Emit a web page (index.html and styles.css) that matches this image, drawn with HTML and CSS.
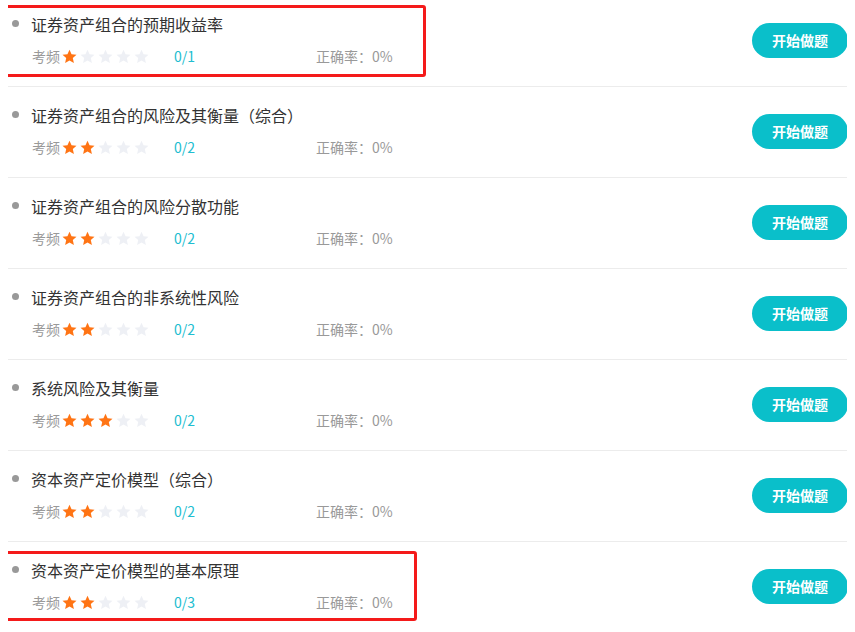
FILE: index.html
```html
<!DOCTYPE html>
<html lang="zh-CN">
<head>
  <meta charset="UTF-8">
  <meta name="viewport" content="width=device-width, initial-scale=1.0">
  <title>知识点练习</title>
  <link rel="stylesheet" href="styles.css">
</head>
<body>
  <svg class="defs" width="0" height="0">
    <symbol id="star" viewBox="0 0 24 24">
      <path d="M12 1l3.3 7.3 7.9.8-5.9 5.3 1.7 7.8L12 18.2l-7 4 1.7-7.8-5.9-5.3 7.9-.8z"/>
    </symbol>
  </svg>

  <ul class="point-list" id="list"></ul>

  <script>
    const points = [
      { name: '证券资产组合的预期收益率', stars: 1, total: 1, mark: 'mark-first' },
      { name: '证券资产组合的风险及其衡量（综合）', stars: 2, total: 2 },
      { name: '证券资产组合的风险分散功能', stars: 2, total: 2 },
      { name: '证券资产组合的非系统性风险', stars: 2, total: 2 },
      { name: '系统风险及其衡量', stars: 3, total: 2 },
      { name: '资本资产定价模型（综合）', stars: 2, total: 2 },
      { name: '资本资产定价模型的基本原理', stars: 2, total: 3, mark: 'mark-last' }
    ];

    const listEl = document.getElementById('list');

    points.forEach(p => {
      let stars = '';
      for (let i = 0; i < 5; i++) {
        stars += '<svg class="star' + (i < p.stars ? ' on' : '') + '"><use href="#star"/></svg>';
      }
      const li = document.createElement('li');
      li.className = 'point';
      li.innerHTML =
        (p.mark ? '<div class="mark ' + p.mark + '"></div>' : '') +
        '<div class="point-info">' +
          '<p class="point-name">' + p.name + '</p>' +
          '<div class="point-meta">' +
            '<span class="freq">考频' + stars + '</span>' +
            '<span class="count">0/' + p.total + '</span>' +
            '<span class="rate">正确率：0%</span>' +
          '</div>' +
        '</div>' +
        '<button class="start-btn">开始做题</button>';
      listEl.appendChild(li);
    });
  </script>
</body>
</html>
```

FILE: styles.css
```css
body {
  margin: 0 8px;
  background: #fff;
  font-family: "Microsoft YaHei", "Noto Sans CJK SC", "Noto Sans", sans-serif;
  color: #333;
}
.defs {
  position: absolute;
}
.point-list {
  list-style: none;
  margin: -4px 0 0;
  padding: 0;
}
.point {
  position: relative;
  display: flex;
  align-items: center;
  justify-content: space-between;
  height: 90px;
  border-bottom: 1px solid #ececec;
}
.point-info {
  margin-top: -2px;
}
.point-name {
  position: relative;
  margin: 0 0 12px;
  padding-left: 23px;
  font-size: 16px;
  line-height: 20px;
  color: #333;
}
.point-name::before {
  content: '';
  position: absolute;
  left: 4px;
  top: 6px;
  width: 7px;
  height: 7px;
  border-radius: 50%;
  background: #999;
}
.point-meta {
  display: flex;
  align-items: center;
  padding-left: 24px;
  font-size: 14px;
  line-height: 20px;
  color: #999;
}
.freq {
  display: flex;
  align-items: center;
  width: 142px;
}
.star {
  width: 15px;
  height: 15px;
  margin-left: 3px;
  fill: #eef0f5;
}
.freq .star:first-child {
  margin-left: 2px;
}
.star.on {
  fill: #ff7414;
}
.count {
  width: 142px;
  color: #21bdd0;
}
.start-btn {
  width: 96px;
  height: 35px;
  margin-right: -1px;
  margin-top: -2px;
  border: none;
  border-radius: 18px;
  background: #0abfca;
  color: #fff;
  font-family: inherit;
  font-size: 14px;
  font-weight: bold;
  cursor: pointer;
}
.mark {
  position: absolute;
  top: 9px;
  border: 3px solid #f41a1a;
  border-radius: 3px;
  box-sizing: border-box;
}
.mark-first {
  left: -5px;
  width: 423px;
  height: 72px;
}
.mark-last {
  left: -3px;
  width: 412px;
  height: 70px;
}
```
